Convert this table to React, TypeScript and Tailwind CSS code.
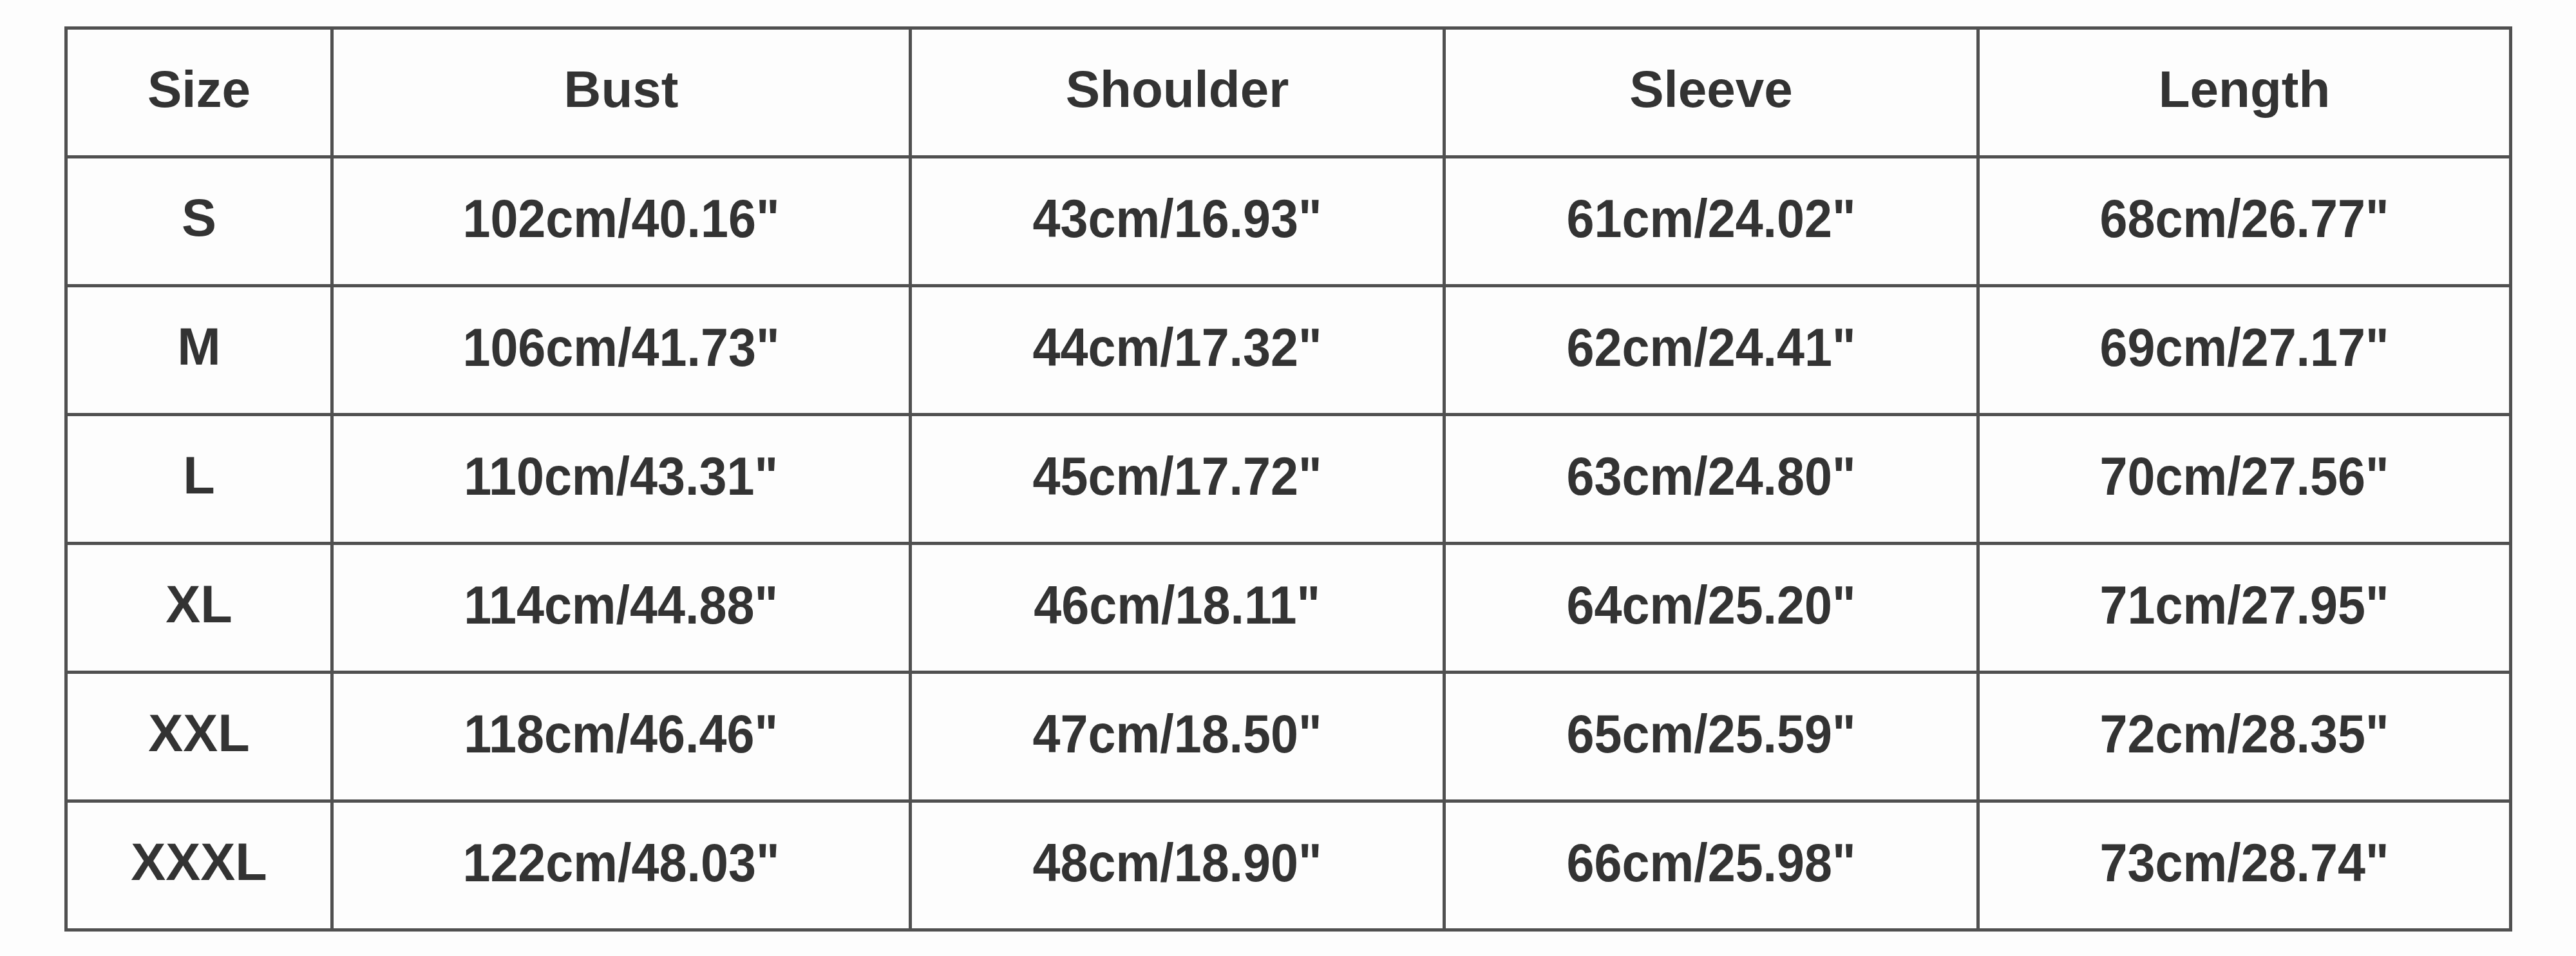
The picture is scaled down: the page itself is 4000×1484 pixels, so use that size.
const headers = ["Size", "Bust", "Shoulder", "Sleeve", "Length"];

const rows = [
  ["S", "102cm/40.16\"", "43cm/16.93\"", "61cm/24.02\"", "68cm/26.77\""],
  ["M", "106cm/41.73\"", "44cm/17.32\"", "62cm/24.41\"", "69cm/27.17\""],
  ["L", "110cm/43.31\"", "45cm/17.72\"", "63cm/24.80\"", "70cm/27.56\""],
  ["XL", "114cm/44.88\"", "46cm/18.11\"", "64cm/25.20\"", "71cm/27.95\""],
  ["XXL", "118cm/46.46\"", "47cm/18.50\"", "65cm/25.59\"", "72cm/28.35\""],
  ["XXXL", "122cm/48.03\"", "48cm/18.90\"", "66cm/25.98\"", "73cm/28.74\""],
];

const App = () => {
  return (
    <div className="w-[4000px] h-[1484px] bg-[#fdfdfd] pl-[100px] pt-[41px] font-['Liberation_Sans',Arial,sans-serif] text-[#333]">
      {/* Size chart */}
      <div className="grid grid-cols-[408px_893px_824px_824px_822px] auto-rows-[195px] gap-[5px] p-[5px] w-fit bg-[#505050]">
        {headers.map((h) => (
          <div key={h} className="bg-[#fdfdfd] flex items-center justify-center pb-[10px] text-[80px] font-bold">
            {h}
          </div>
        ))}
        {rows.map((row) =>
          row.map((cell, i) => (
            <div
              key={row[0] + i}
              className="bg-[#fdfdfd] flex items-center justify-center pb-[10px] text-[84px] font-bold"
            >
              {i === 0 ? (
                <span className="text-[81px]">{cell}</span>
              ) : (
                <span className="inline-block scale-x-[0.92]">{cell}</span>
              )}
            </div>
          ))
        )}
      </div>
    </div>
  );
};

export default App;
